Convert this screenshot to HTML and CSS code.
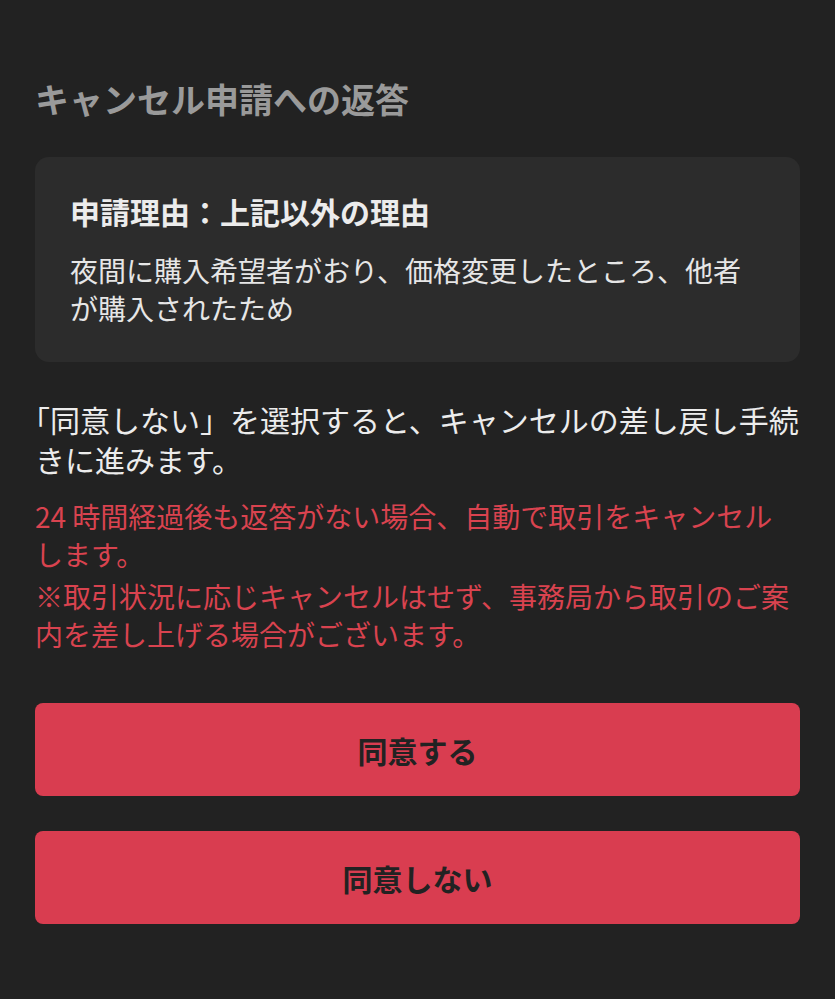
FILE: index.html
```html
<!DOCTYPE html>
<html lang="ja">

<head>
    <meta charset="UTF-8">
    <meta name="viewport" content="width=device-width, initial-scale=1.0">
    <title>キャンセル申請への返答</title>
    <link rel="stylesheet" href="styles.css">
</head>

<body>
    <div class="container">
        <h1 class="page-title">キャンセル申請への返答</h1>

        <div class="reason-card">
            <h2 class="reason-title">申請理由：上記以外の理由</h2>
            <p class="reason-text">夜間に購入希望者がおり、価格変更したところ、他者が購入されたため</p>
        </div>

        <p class="notice">「同意しない」を選択すると、キャンセルの差し戻し手続きに進みます。</p>

        <div class="warning">
            <p>24 時間経過後も返答がない場合、自動で取引をキャンセルします。</p>
            <p>※取引状況に応じキャンセルはせず、事務局から取引のご案内を差し上げる場合がございます。</p>
        </div>

        <div class="actions">
            <button type="button" class="btn">同意する</button>
            <button type="button" class="btn">同意しない</button>
        </div>
    </div>
</body>

</html>
```

FILE: styles.css
```css
body {
    margin: 0;
    background-color: #222222;
    color: #e9e9e9;
    font-family: "Noto Sans CJK JP", "Noto Sans", sans-serif;
}

.container {
    padding: 75px 35px 40px;
}

.page-title {
    margin: 0 0 34px;
    font-size: 34px;
    line-height: 48px;
    font-weight: 700;
    color: #9a9a9a;
}

.reason-card {
    background-color: #2c2c2c;
    border-radius: 14px;
    padding: 34px 35px 35px;
}

.reason-title {
    margin: 0 0 20px;
    font-size: 30px;
    line-height: 40px;
    font-weight: 700;
    color: #ececec;
}

.reason-text {
    margin: 0;
    font-size: 28px;
    line-height: 38px;
    color: #e6e6e6;
}

/* opening bracket hangs into the margin like on iOS */
.notice {
    margin: 37px -15px 0 0;
    text-indent: -15px;
    font-size: 30px;
    line-height: 40px;
    color: #ececec;
}

.warning {
    margin-top: 18px;
    color: #d9434f;
    font-size: 28px;
    line-height: 38px;
}

.warning p {
    margin: 0 0 4px;
}

.actions {
    display: flex;
    flex-direction: column;
    gap: 35px;
    margin-top: 50px;
}

.btn {
    height: 93px;
    border: none;
    border-radius: 8px;
    background-color: #d93d50;
    color: #222222;
    font-family: inherit;
    font-size: 30px;
    font-weight: 700;
    cursor: pointer;
}
```
